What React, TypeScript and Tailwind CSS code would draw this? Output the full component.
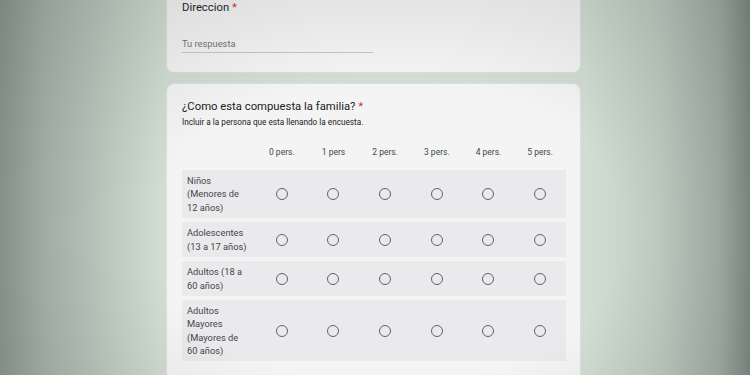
import React from "react";

const cols = ["0 pers.", "1 pers", "2 pers.", "3 pers.", "4 pers.", "5 pers."];
const rows: { label: string[]; h: string }[] = [
  { label: ["Niños", "(Menores de", "12 años)"], h: "h-[48px]" },
  { label: ["Adolescentes", "(13 a 17 años)"], h: "h-[35px]" },
  { label: ["Adultos (18 a", "60 años)"], h: "h-[35px]" },
  { label: ["Adultos", "Mayores", "(Mayores de", "60 años)"], h: "h-[61px]" },
];

function Radio() {
  return <div className="w-[12px] h-[12px] rounded-full border-[1.4px] border-[#5f6368]" />;
}

export default function App() {
  return (
    <div
      className="relative w-[750px] h-[375px] overflow-hidden bg-[linear-gradient(90deg,#8e9a92_0%,#aab6ad_6%,#c4d0c6_16%,#d2ddd3_22%,#d2ddd3_78%,#bfcbc1_88%,#a3aea6_96%,#7f8a83_100%)]"
      style={{ fontFamily: "Roboto, 'Liberation Sans', sans-serif" }}
    >
      <div className="ml-[166px] w-[415px] h-full flex flex-col gap-[10px]">
        <div className="h-[73px] shrink-0 bg-[#f4f4f4] rounded-b-[8px] px-[15px] pt-[1px] border-x border-b border-[#dedede]">
          <div className="text-[11.3px] leading-[14px] text-[#202124]">
            Direccion <span className="text-[#d93025]">*</span>
          </div>
          <div className="mt-[22px] w-[192px] border-b border-[#c8c8c8] pb-[2px] text-[9.3px] leading-[13px] text-[#70757a]">
            Tu respuesta
          </div>
        </div>
        <div className="flex-1 bg-[#f4f4f4] rounded-t-[8px] px-[15px] pt-[15px] border-x border-t border-[#dedede]">
          <div className="text-[11.3px] leading-[16px] text-[#202124]">
            ¿Como esta compuesta la familia? <span className="text-[#d93025]">*</span>
          </div>
          <div className="text-[8.2px] leading-[12px] text-[#202124] mt-[1px]">
            Incluir a la persona que esta llenando la encuesta.
          </div>
          <div className="mt-[12px] w-[384px]">
            <div className="grid grid-cols-[74px_repeat(6,1fr)] h-[24px] items-center">
              <div />
              {cols.map((c) => (
                <div key={c} className="text-center text-[8.5px] text-[#44474b]">
                  {c}
                </div>
              ))}
            </div>
            <div className="mt-[6px] flex flex-col gap-[4px]">
              {rows.map((r, i) => (
                <div key={i} className={`grid grid-cols-[74px_repeat(6,1fr)] items-center bg-[#eaeaec] ${r.h}`}>
                  <div className="pl-[5px] text-[9.3px] leading-[13.5px] text-[#44474b]">
                    {r.label.map((l, j) => (
                      <div key={j}>{l}</div>
                    ))}
                  </div>
                  {cols.map((c) => (
                    <div key={c} className="flex justify-center">
                      <Radio />
                    </div>
                  ))}
                </div>
              ))}
            </div>
          </div>
        </div>
      </div>
      <div className="pointer-events-none absolute inset-0 bg-[radial-gradient(ellipse_70%_90%_at_52%_62%,rgba(0,0,0,0)_45%,rgba(40,50,45,0.18)_100%)]" />
    </div>
  );
}
